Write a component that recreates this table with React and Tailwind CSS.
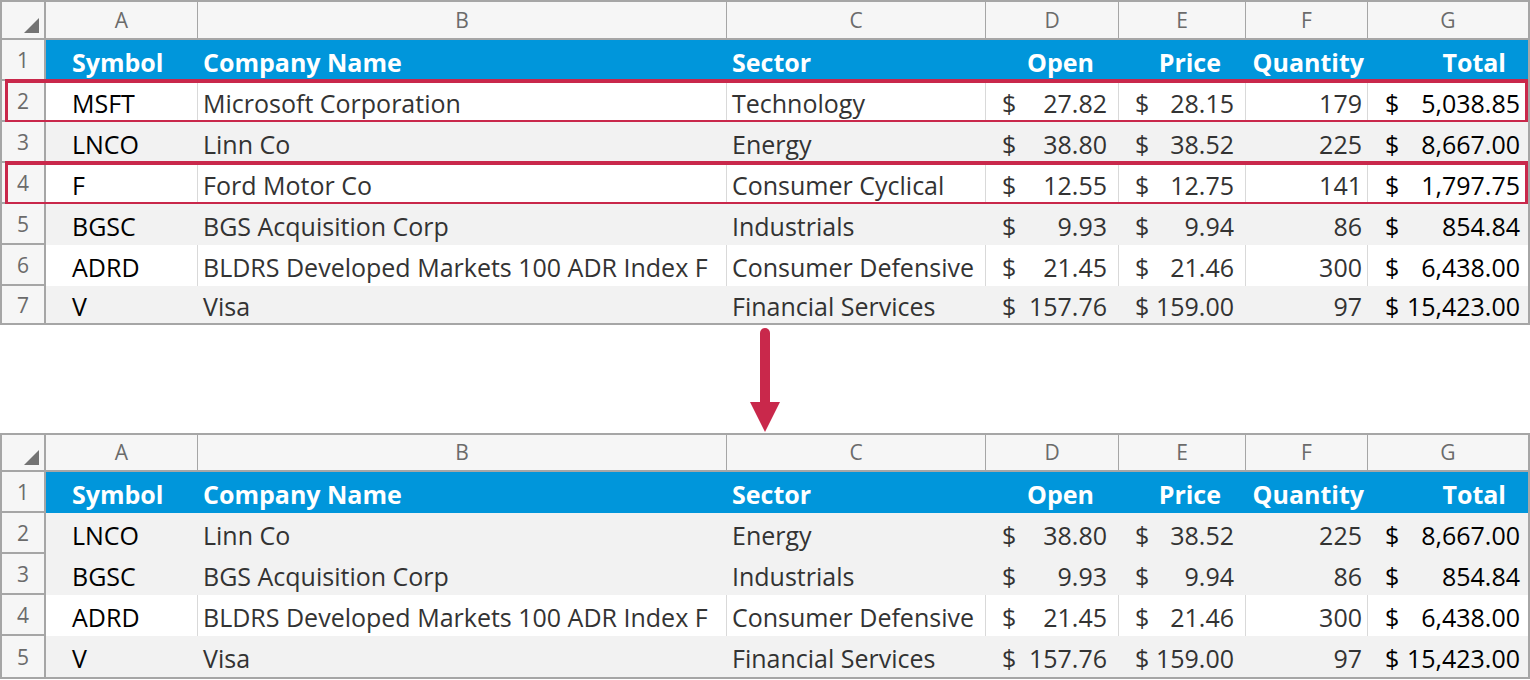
const cols = [
  { l: 'A', w: 'w-[152px]' },
  { l: 'B', w: 'w-[529px]' },
  { l: 'C', w: 'w-[259px]' },
  { l: 'D', w: 'w-[133px]' },
  { l: 'E', w: 'w-[127px]' },
  { l: 'F', w: 'w-[122px]' },
  { l: 'G', w: 'w-[160px]' },
];

const top = [
  { d: ['MSFT', 'Microsoft Corporation', 'Technology', '27.82', '28.15', '179', '5,038.85'], gray: false, mark: true },
  { d: ['LNCO', 'Linn Co', 'Energy', '38.80', '38.52', '225', '8,667.00'], gray: true },
  { d: ['F', 'Ford Motor Co', 'Consumer Cyclical', '12.55', '12.75', '141', '1,797.75'], gray: false, mark: true },
  { d: ['BGSC', 'BGS Acquisition Corp', 'Industrials', '9.93', '9.94', '86', '854.84'], gray: true },
  { d: ['ADRD', 'BLDRS Developed Markets 100 ADR Index F', 'Consumer Defensive', '21.45', '21.46', '300', '6,438.00'], gray: false },
  { d: ['V', 'Visa', 'Financial Services', '157.76', '159.00', '97', '15,423.00'], gray: true },
];

const bottom = [
  { d: ['LNCO', 'Linn Co', 'Energy', '38.80', '38.52', '225', '8,667.00'], gray: true },
  { d: ['BGSC', 'BGS Acquisition Corp', 'Industrials', '9.93', '9.94', '86', '854.84'], gray: true },
  { d: ['ADRD', 'BLDRS Developed Markets 100 ADR Index F', 'Consumer Defensive', '21.45', '21.46', '300', '6,438.00'], gray: false },
  { d: ['V', 'Visa', 'Financial Services', '157.76', '159.00', '97', '15,423.00'], gray: true },
];

function RowNum({ n, last }) {
  return (
    <div
      className={`w-[44px] shrink-0 flex items-center justify-center pt-[2px] bg-[#f6f6f6] border-r-2 border-[#a6a6a6] text-[21px] font-normal text-[#6b6b6b] ${
        last ? '' : 'border-b-2'
      }`}
    >
      {n}
    </div>
  );
}

function Money({ v, w, pl, pr, line, black }) {
  return (
    <div className={`${w} ${line} shrink-0 flex items-center justify-between pt-[3px] ${pl} ${pr} ${black ? 'text-black' : 'text-[#333333]'}`}>
      <span>$</span>
      <span>{v}</span>
    </div>
  );
}

function DataRow({ n, row, h, last }) {
  const [a, b, c, d, e, f, g] = row.d;
  const line = row.gray ? 'border-r border-[#f2f2f2]' : 'border-r border-[#d9d9d9]';
  return (
    <div className={`relative flex ${h} ${row.gray ? 'bg-[#f2f2f2]' : 'bg-white'}`}>
      <RowNum n={n} last={last} />
      <div className={`w-[152px] ${line} shrink-0 flex items-center pt-[3px] pl-[26px] text-black`}>{a}</div>
      <div className={`w-[529px] ${line} shrink-0 flex items-center pt-[3px] pl-[5px] text-[#333333] whitespace-nowrap overflow-hidden`}>{b}</div>
      <div className={`w-[259px] ${line} shrink-0 flex items-center pt-[3px] pl-[5px] text-[#333333] whitespace-nowrap overflow-hidden`}>{c}</div>
      <Money v={d} w="w-[133px]" pl="pl-[16px]" pr="pr-[11px]" line={line} />
      <Money v={e} w="w-[127px]" pl="pl-[16px]" pr="pr-[11px]" line={line} />
      <div className={`w-[122px] ${line} shrink-0 flex items-center justify-end pt-[3px] pr-[5px] text-[#333333]`}>{f}</div>
      <Money v={g} w="w-[160px]" pl="pl-[17px]" pr="pr-[8px]" line="" black />
      {row.mark && (
        <div className="absolute left-[3px] right-0 -top-[2px] -bottom-[2px] border-x-[3px] border-y-4 border-[#c9284b] pointer-events-none" />
      )}
    </div>
  );
}

function Sheet({ rows, letterH, lastH }) {
  return (
    <div className="w-[1530px] border-2 border-[#a6a6a6] text-[25px] leading-none">
      <div className={`flex ${letterH} border-b-2 border-[#a6a6a6] bg-[#f6f6f6] text-[21px] text-[#6b6b6b]`}>
        <div className="w-[44px] shrink-0 flex items-end justify-end p-[5px] border-r-2 border-[#a6a6a6]">
          <svg width="15" height="15" viewBox="0 0 15 15">
            <polygon points="15,0 15,15 0,15" fill="#737373" />
          </svg>
        </div>
        {cols.map((c, i) => (
          <div
            key={c.l}
            className={`${c.w} shrink-0 flex items-center justify-center ${i < cols.length - 1 ? 'border-r border-[#a6a6a6]' : ''}`}
          >
            {c.l}
          </div>
        ))}
      </div>
      <div className="flex h-[41px] bg-[#0096db] text-white font-bold">
        <RowNum n={1} />
        <div className="w-[152px] shrink-0 flex items-center pt-[3px] pl-[26px]">Symbol</div>
        <div className="w-[529px] shrink-0 flex items-center pt-[3px] pl-[5px]">Company Name</div>
        <div className="w-[259px] shrink-0 flex items-center pt-[3px] pl-[5px]">Sector</div>
        <div className="w-[133px] shrink-0 flex items-center justify-end pt-[3px] pr-[25px]">Open</div>
        <div className="w-[127px] shrink-0 flex items-center justify-end pt-[3px] pr-[25px]">Price</div>
        <div className="w-[122px] shrink-0 flex items-center justify-end pt-[3px] pr-[4px]">Quantity</div>
        <div className="w-[160px] shrink-0 flex items-center justify-end pt-[3px] pr-[22px]">Total</div>
      </div>
      {rows.map((r, i) => (
        <DataRow
          key={i}
          n={i + 2}
          row={r}
          h={i === rows.length - 1 ? lastH : 'h-[41px]'}
          last={i === rows.length - 1}
        />
      ))}
    </div>
  );
}

export default function App() {
  return (
    <div className="w-[1530px] h-[680px] bg-white overflow-hidden font-['Open_Sans','Liberation_Sans',sans-serif]">
      <Sheet rows={top} letterH="h-[38px]" lastH="h-[37px]" />
      <div className="flex h-[108px] pl-[750px] pt-[3px]">
        <svg width="30" height="104" viewBox="0 0 30 104">
          <line x1="15" y1="5" x2="15" y2="78" stroke="#c9284b" strokeWidth="10" strokeLinecap="round" />
          <polygon points="0,74 30,74 15,104" fill="#c9284b" />
        </svg>
      </div>
      <Sheet rows={bottom} letterH="h-[37px]" lastH="h-[41px]" />
    </div>
  );
}
